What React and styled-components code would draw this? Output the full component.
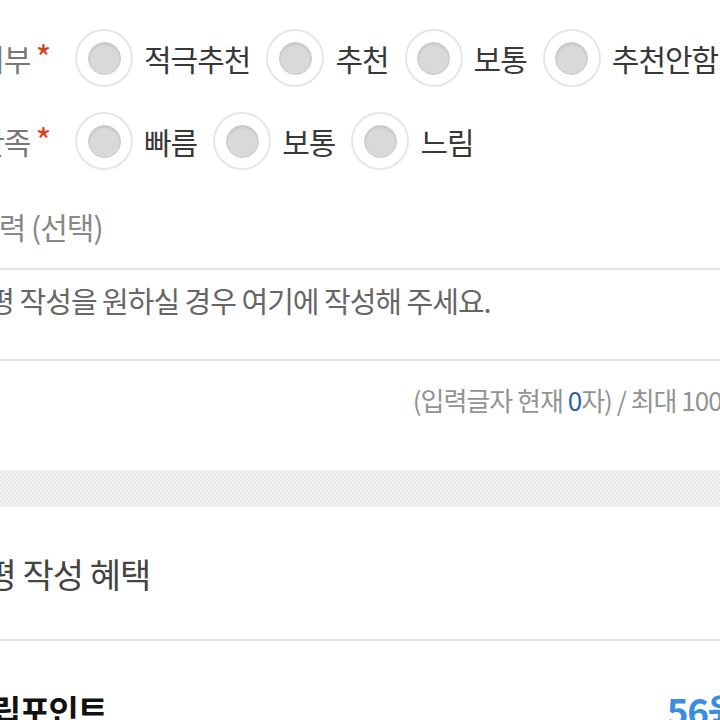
import React from "react";
import styled, { createGlobalStyle } from "styled-components";

const Global = createGlobalStyle`
  html, body {
    margin: 0;
    padding: 0;
    background: #ffffff;
    overflow: hidden;
  }
  body {
    font-family: "Noto Sans CJK KR", "Noto Sans", sans-serif;
  }
`;

const Page = styled.div`
  width: 880px;
  margin-left: -84px;
  padding-top: 29px;
  color: #444;
`;

const Field = styled.div`
  display: flex;
  align-items: center;
  height: 58px;
  margin-bottom: ${(p) => p.$after || 0}px;
`;

const Label = styled.div`
  width: 159px;
  box-sizing: border-box;
  padding-left: 8px;
  flex: none;
  font-size: 30px;
  letter-spacing: -1px;
  color: #777;
  line-height: 38px;
  white-space: nowrap;
`;

const Req = styled.span`
  color: #d8401c;
  margin-left: 5px;
  font-size: 34px;
  vertical-align: top;
  line-height: 36px;
`;

const Options = styled.div`
  display: flex;
  align-items: center;
  gap: 16px;
`;

const Option = styled.label`
  display: flex;
  align-items: center;
  gap: 11px;
  font-size: 30px;
  letter-spacing: -1px;
  color: #383838;
  line-height: 38px;
`;

const Radio = styled.span`
  width: 58px;
  height: 58px;
  box-sizing: border-box;
  border-radius: 50%;
  border: 2px solid #e6e6e6;
  background: #fff;
  display: flex;
  align-items: center;
  justify-content: center;
  flex: none;

  &::after {
    content: "";
    width: 33px;
    height: 33px;
    box-sizing: border-box;
    border-radius: 50%;
    background: #d9d9d9;
    border: 1px solid #c8c8c8;
    box-shadow: inset 0 2px 2px rgba(0, 0, 0, 0.08);
  }
`;

const SubLabel = styled.div`
  margin-top: 37px;
  padding-left: 3px;
  font-size: 30px;
  letter-spacing: -1px;
  line-height: 38px;
  color: #888;
`;

const TextBox = styled.textarea`
  display: block;
  width: 100%;
  height: 93px;
  box-sizing: border-box;
  margin-top: 23px;
  padding: 12px 21px;
  border: none;
  border-top: 2px solid #e3e3e3;
  border-bottom: 2px solid #e3e3e3;
  resize: none;
  outline: none;
  font-family: inherit;
  font-size: 29px;
  letter-spacing: -1px;
  line-height: 36px;
  color: #444;

  &::placeholder {
    color: #666;
    opacity: 1;
  }
`;

const Counter = styled.div`
  margin-top: 22px;
  padding-right: 38px;
  text-align: right;
  font-size: 26px;
  letter-spacing: -1px;
  line-height: 34px;
  color: #939393;
`;

const Count = styled.em`
  font-style: normal;
  color: #2a5fae;
`;

const Band = styled.div`
  margin-top: 53px;
  height: 37px;
  background-color: #f3f3f3;
  background-image: linear-gradient(45deg, #e9e9e9 25%, transparent 25%, transparent 75%, #e9e9e9 75%),
    linear-gradient(45deg, #e9e9e9 25%, transparent 25%, transparent 75%, #e9e9e9 75%);
  background-size: 4px 4px;
  background-position: 0 0, 2px 2px;
`;

const SectionTitle = styled.h2`
  margin: 45px 0 0;
  padding: 0 0 43px 9px;
  border-bottom: 2px solid #e3e3e3;
  font-size: 34px;
  font-weight: 400;
  letter-spacing: -1px;
  line-height: 44px;
  color: #444;
`;

const PointRow = styled.div`
  display: flex;
  justify-content: space-between;
  align-items: center;
  margin-top: 46px;
  padding: 0 56px 0 46px;
`;

const PointLabel = styled.div`
  font-size: 33px;
  font-weight: 700;
  letter-spacing: -1.5px;
  line-height: 46px;
  color: #111;
`;

const PointValue = styled.div`
  font-size: 37px;
  font-weight: 700;
  letter-spacing: -1.5px;
  line-height: 46px;
  color: #3a8ee0;
`;

const groups = [
  { label: "추천여부", options: ["적극추천", "추천", "보통", "추천안함"] },
  { label: "배송만족", options: ["빠름", "보통", "느림"] },
];

export default function App() {
  return (
    <>
      <Global />
      <Page>
        {groups.map((g, i) => (
          <Field key={g.label} $after={i === 0 ? 25 : 0}>
            <Label>
              {g.label}
              <Req>*</Req>
            </Label>
            <Options>
              {g.options.map((o) => (
                <Option key={o}>
                  <Radio />
                  {o}
                </Option>
              ))}
            </Options>
          </Field>
        ))}
        <SubLabel>내용입력 (선택)</SubLabel>
        <TextBox placeholder="구매평 작성을 원하실 경우 여기에 작성해 주세요." />
        <Counter>
          (입력글자 현재 <Count>0</Count>자) / 최대 1000자
        </Counter>
        <Band />
        <SectionTitle>구매평 작성 혜택</SectionTitle>
        <PointRow>
          <PointLabel>적립포인트</PointLabel>
          <PointValue>56원</PointValue>
        </PointRow>
      </Page>
    </>
  );
}
